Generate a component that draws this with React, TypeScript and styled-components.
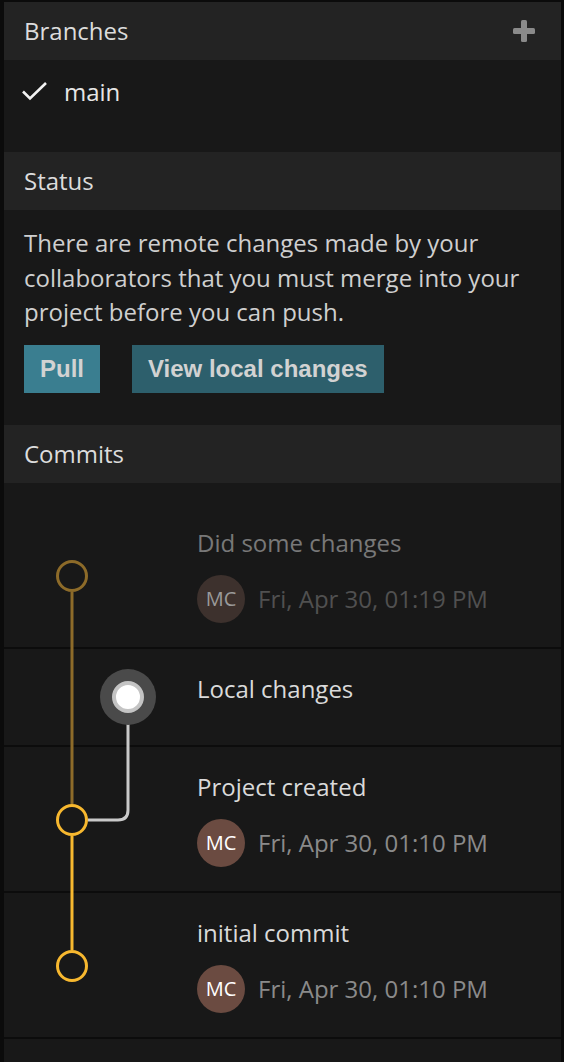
import styled, { createGlobalStyle } from "styled-components";

const GlobalStyle = createGlobalStyle`
  html, body {
    margin: 0;
    padding: 0;
    background: #0b0b0b;
  }
  body {
    font-family: "Open Sans", "Noto Sans", sans-serif;
    -webkit-font-smoothing: antialiased;
  }
`;

const Panel = styled.div`
  margin: 2px 3px 0 4px;
  height: 1060px;
  overflow: hidden;
  background: #181818;
`;

const SectionHeader = styled.div`
  display: flex;
  align-items: center;
  justify-content: space-between;
  height: 58px;
  padding: 0 20px;
  background: #232323;
  color: #dcdcdc;
  font-size: 24px;
  line-height: 56px;
`;

const AddButton = styled.button`
  display: flex;
  align-items: center;
  justify-content: center;
  width: 28px;
  height: 28px;
  margin-right: 3px;
  padding: 0;
  border: none;
  background: transparent;
  cursor: pointer;
`;

const BranchList = styled.div`
  padding: 1px 0 31px;
`;

const BranchRow = styled.div`
  display: flex;
  align-items: center;
  gap: 16px;
  height: 60px;
  padding: 0 17px;
  color: #e6e6e6;
  font-size: 24px;
`;

const StatusBody = styled.div`
  padding: 16px 20px 32px;
`;

const StatusText = styled.p`
  margin: 0 0 15px;
  color: #cfcfcf;
  font-size: 24px;
  line-height: 34.5px;
`;

const Actions = styled.div`
  display: flex;
  gap: 32px;
`;

const ActionButton = styled.button<{ $tone: "primary" | "secondary" }>`
  height: 48px;
  padding: 0 16px;
  border: none;
  background: ${(p) => (p.$tone === "primary" ? "#3a7e90" : "#2d5f6c")};
  color: #d2d2d2;
  font-family: "Liberation Sans", Arial, sans-serif;
  font-weight: bold;
  font-size: 24px;
  cursor: pointer;
`;

const CommitList = styled.div`
  position: relative;
  padding-top: 20px;
`;

const CommitRow = styled.div<{ $short?: boolean }>`
  height: ${(p) => (p.$short ? 98 : 146)}px;
  padding: 25px 0 0 193px;
  box-sizing: border-box;
  border-bottom: 2px solid #0c0c0c;
`;

const CommitTitle = styled.div<{ $dim?: boolean }>`
  height: 30px;
  line-height: 30px;
  font-size: 24px;
  color: ${(p) => (p.$dim ? "#787878" : "#dadada")};
`;

const CommitMeta = styled.div`
  display: flex;
  align-items: center;
  gap: 13px;
  margin-top: 17px;
`;

const Avatar = styled.div<{ $dim?: boolean }>`
  display: flex;
  align-items: center;
  justify-content: center;
  width: 48px;
  height: 48px;
  border-radius: 50%;
  background: ${(p) => (p.$dim ? "#3d312d" : "#6b4b41")};
  color: ${(p) => (p.$dim ? "#9a9a9a" : "#ffffff")};
  font-size: 20px;
`;

const CommitDate = styled.div<{ $dim?: boolean }>`
  font-size: 24px;
  color: ${(p) => (p.$dim ? "#505050" : "#8a8a8a")};
`;

const Graph = styled.svg`
  position: absolute;
  top: 0;
  left: 0;
  pointer-events: none;
`;

const commits = [
  { title: "Did some changes", date: "Fri, Apr 30, 01:19 PM", dim: true },
  { title: "Local changes", local: true },
  { title: "Project created", date: "Fri, Apr 30, 01:10 PM" },
  { title: "initial commit", date: "Fri, Apr 30, 01:10 PM" },
];

function CommitGraph() {
  const dimGold = "#8d6b29";
  const gold = "#f7b82f";
  return (
    <Graph width="200" height="560" viewBox="0 0 200 560">
      <line x1="68" y1="109" x2="68" y2="321" stroke={dimGold} strokeWidth="3" />
      <line x1="68" y1="353" x2="68" y2="467" stroke={gold} strokeWidth="3" />
      <path d="M124 228 V327 Q124 337 114 337 H84" fill="none" stroke="#c9c9c9" strokeWidth="3" />
      <circle cx="68" cy="93" r="14.5" fill="none" stroke={dimGold} strokeWidth="3" />
      <circle cx="124" cy="214" r="28" fill="#4a4a4a" />
      <circle cx="124" cy="214" r="14" fill="#ffffff" stroke="#c4c4c4" strokeWidth="4" />
      <circle cx="68" cy="337" r="14.5" fill="none" stroke={gold} strokeWidth="3" />
      <circle cx="68" cy="483" r="14.5" fill="none" stroke={gold} strokeWidth="3" />
    </Graph>
  );
}

export default function App() {
  return (
    <>
      <GlobalStyle />
      <Panel>
        <SectionHeader>
          Branches
          <AddButton aria-label="Add branch">
            <svg width="22" height="22" viewBox="0 0 22 22">
              <rect x="8" y="0" width="6" height="22" rx="1.5" fill="#8a8a8a" />
              <rect x="0" y="8" width="22" height="6" rx="1.5" fill="#8a8a8a" />
            </svg>
          </AddButton>
        </SectionHeader>
        <BranchList>
          <BranchRow>
            <svg width="27" height="20" viewBox="0 0 27 20">
              <path d="M2 10.5 L9 17.5 L25 2" fill="none" stroke="#f2f2f2" strokeWidth="2.6" />
            </svg>
            main
          </BranchRow>
        </BranchList>

        <SectionHeader>Status</SectionHeader>
        <StatusBody>
          <StatusText>
            There are remote changes made by your collaborators that you must merge into your
            project before you can push.
          </StatusText>
          <Actions>
            <ActionButton $tone="primary">Pull</ActionButton>
            <ActionButton $tone="secondary">View local changes</ActionButton>
          </Actions>
        </StatusBody>

        <SectionHeader>Commits</SectionHeader>
        <CommitList>
          {commits.map((c) => (
            <CommitRow key={c.title} $short={c.local}>
              <CommitTitle $dim={c.dim}>{c.title}</CommitTitle>
              {c.date && (
                <CommitMeta>
                  <Avatar $dim={c.dim}>MC</Avatar>
                  <CommitDate $dim={c.dim}>{c.date}</CommitDate>
                </CommitMeta>
              )}
            </CommitRow>
          ))}
          <CommitRow />
          <CommitGraph />
        </CommitList>
      </Panel>
    </>
  );
}
